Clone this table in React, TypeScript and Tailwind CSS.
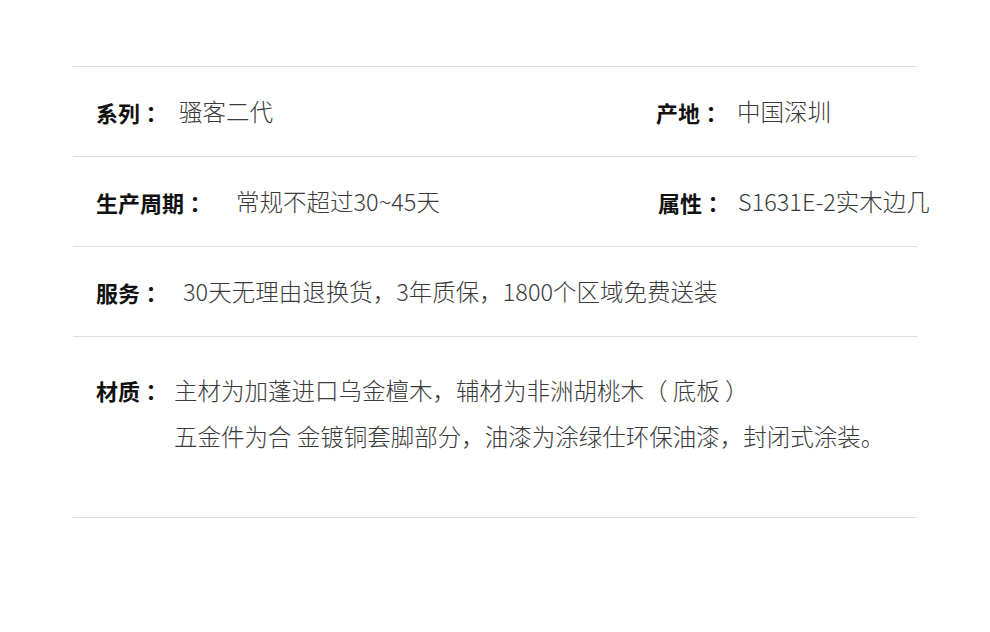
const FONT = "font-['Noto_Sans_CJK_SC','Noto_Sans',sans-serif]";
const TC = "font-['Noto_Sans_CJK_TC','Noto_Sans',sans-serif]";

function Label({ children }: { children: string }) {
  return (
    <span className={`${TC} shrink-0 text-[22px] font-bold leading-none text-[#111]`}>
      {children}
    </span>
  );
}

function Value({ children, gap }: { children: React.ReactNode; gap: string }) {
  return (
    <span className={`${FONT} ${gap} text-[23.5px] font-light leading-none text-[#3a3a3a] whitespace-nowrap`}>
      {children}
    </span>
  );
}

export default function App() {
  return (
    <div className="h-[632px] w-[990px] bg-white px-[73px] pt-[66px]">
      <div className="border-t border-[#dedede]">
        <div className="flex h-[89px] items-center pl-[23px]">
          <div className="flex w-[560px] shrink-0 items-center">
            <Label>系列：</Label>
            <Value gap="ml-[17px]">骚客二代</Value>
          </div>
          <div className="flex shrink-0 items-center">
            <Label>产地：</Label>
            <Value gap="ml-[15px]">中国深圳</Value>
          </div>
        </div>
      </div>

      <div className="border-t border-[#dedede]">
        <div className="flex h-[89px] items-center pl-[23px]">
          <div className="flex w-[562px] shrink-0 items-center">
            <Label>生产周期：</Label>
            <Value gap="ml-[30px]">常规不超过30~45天</Value>
          </div>
          <div className="flex shrink-0 items-center">
            <Label>属性：</Label>
            <Value gap="ml-[14px]">S1631E-2实木边几</Value>
          </div>
        </div>
      </div>

      <div className="border-t border-[#dedede]">
        <div className="flex h-[89px] items-center pl-[23px]">
          <Label>服务：</Label>
          <Value gap="ml-[21px]">30天无理由退换货，3年质保，1800个区域免费送装</Value>
        </div>
      </div>

      <div className="border-t border-[#dedede]">
        <div className="flex h-[180px] items-start pl-[23px] pt-[30px]">
          <div className="flex h-[46px] items-center">
            <Label>材质：</Label>
          </div>
          <div className={`${FONT} ml-[12px] text-[23.5px] font-light leading-[46px] text-[#3a3a3a] whitespace-pre`}>
            <p>主材为加蓬进口乌金檀木，辅材为非洲胡桃木（ 底板 ）</p>
            <p>五金件为合 金镀铜套脚部分，油漆为涂绿仕环保油漆，封闭式涂装。</p>
          </div>
        </div>
      </div>

      <div className="border-t border-[#dedede]" />
    </div>
  );
}
